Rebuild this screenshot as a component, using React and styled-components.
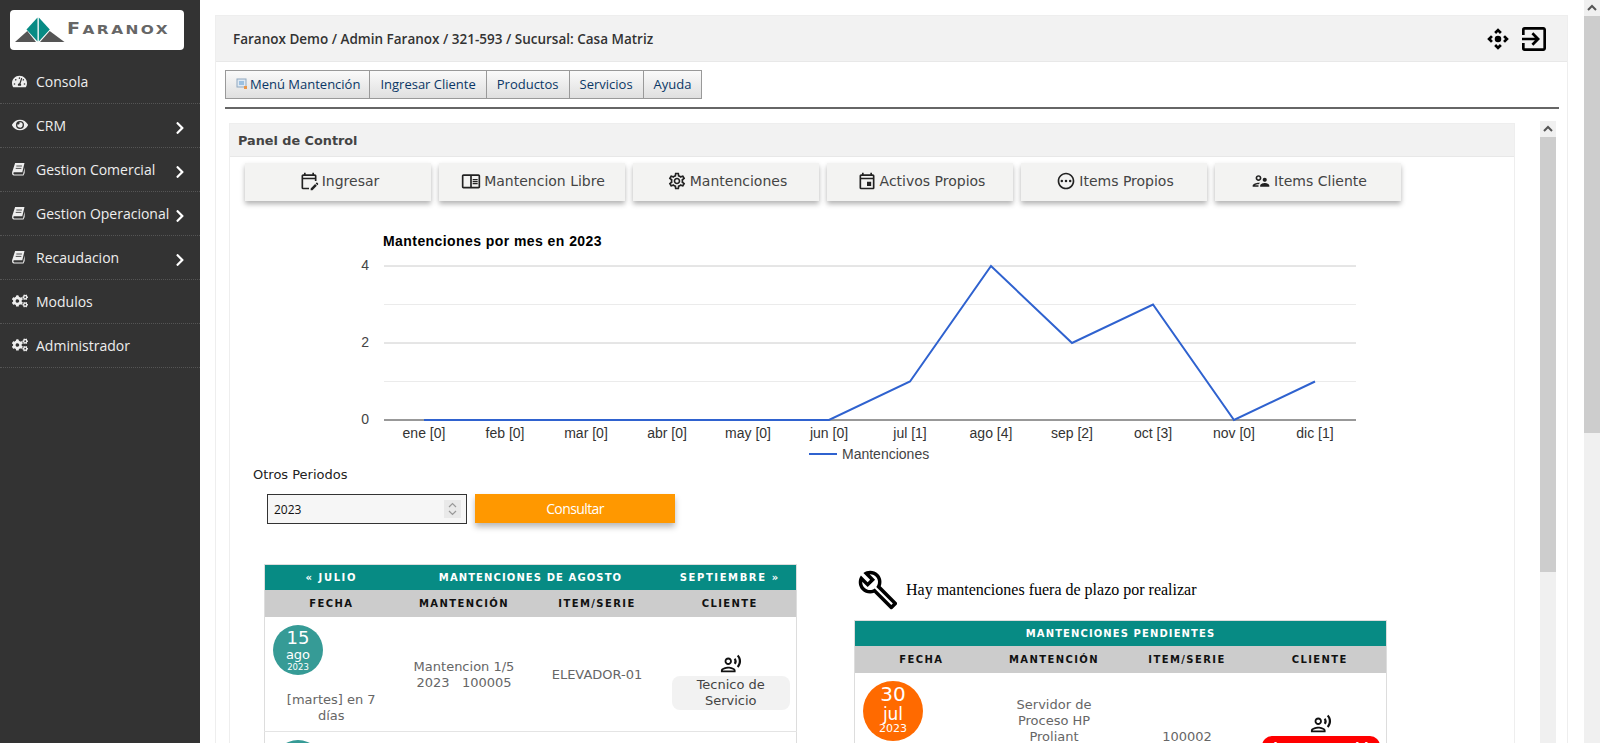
import React from 'react';
import styled, { createGlobalStyle } from 'styled-components';
import { FaTachometerAlt, FaEye, FaCogs, FaChevronRight } from 'react-icons/fa';
import {
  MdOutlineEditCalendar, MdOutlineChromeReaderMode, MdOutlineSettings, MdOutlineEvent,
  MdOutlinePending, MdOutlineSupervisorAccount, MdOutlineRecordVoiceOver, MdOutlineBuild,
  MdControlCamera, MdOutlineExitToApp,
} from 'react-icons/md';

const Global = createGlobalStyle`
  html, body { height: 100%; overflow: hidden; }
  body { margin: 0; background: #fff; font-family: "Open Sans", sans-serif; }
`;

const Layout = styled.div`display: flex; height: 100vh; overflow: hidden;`;
const Sidebar = styled.aside`width: 200px; flex: none; background: #333;`;
const LogoBox = styled.div`
  margin: 10px 16px 10px 10px; height: 40px; background: #fff; border-radius: 4px;
  display: flex; align-items: center; padding-left: 5px; gap: 2px;
`;
const LogoWord = styled.span`
  display: inline-block; font-family: "DejaVu Sans", sans-serif; font-weight: bold; font-size: 12.5px; color: #666;
  letter-spacing: 2px; transform: scaleX(1.23); transform-origin: left; line-height: 1; white-space: nowrap;
  &::first-letter { font-size: 15.5px; }
`;
const NavRow = styled.div`
  box-sizing: border-box; height: 44px; border-bottom: 1px dotted #555; display: flex; align-items: center;
  padding: 0 13px 1px 12px; color: #eee; font-size: 14px;
`;
const NavIcon = styled.span`width: 24px; flex: none; display: flex; font-size: 15px; color: #eee;`;
const NavLabel = styled.span`flex: 1; white-space: nowrap;`;
const NavArrow = styled.span`display: flex; font-size: 14px; color: #fff; margin-top: 5px;`;

const Main = styled.main`flex: 1; min-width: 0; padding: 15px 16px 0 15px; display: flex;`;
const Card = styled.div`flex: 1; min-width: 0; border: 1px solid #eee; border-bottom: 0;`;
const TopBar = styled.header`
  height: 45px; background: #f2f2f2; border-bottom: 1px solid #e8e8e8; display: flex;
  align-items: center; justify-content: space-between; padding: 0 17px 0 17px;
  color: #333; font-size: 13.5px; font-weight: 600;
`;
const TopIcons = styled.div`display: flex; align-items: center; gap: 7px; color: #000;`;
const Body = styled.div`padding: 8px 8px 0 9px;`;
const TabBar = styled.nav`display: flex; height: 29px;`;
const Tab = styled.a`
  display: flex; align-items: center; gap: 2px; padding: 0 10px 2px; border: 1px solid #999; margin-left: -1px;
  background: linear-gradient(#fafafa, #dfdfdf); color: #0a3766; font-size: 13px; white-space: nowrap;
  &:first-child { margin-left: 0; padding-right: 9px; }
`;
const Rule = styled.hr`margin: 8px 0 0; height: 2px; border: 0; background: #666;`;
const ScrollRow = styled.div`display: flex; margin: 12px 3px 0 0;`;
const ScrollContent = styled.div`flex: 1; min-width: 0; padding: 2px 25px 0 4px;`;
const ScrollTrack = styled.div`
  width: 16px; flex: none; background: #f0f0f0; display: flex; flex-direction: column;
  align-self: ${(p) => (p.$page ? 'stretch' : 'flex-start')}; height: ${(p) => (p.$page ? 'auto' : '1100px')};
`;
const ScrollArrow = styled.svg`display: block; width: 16px; height: 16px; flex: none;`;
const ScrollThumb = styled.div`background: #cdcdcd; height: ${(p) => p.$length}px; flex: none;`;
const Panel = styled.section`border: 1px solid #eee; border-bottom: 0;`;
const PanelTitle = styled.h2`
  margin: 0; height: 32px; background: #f2f2f2; border-bottom: 1px solid #e8e8e8; display: flex; align-items: center;
  padding-left: 8px; font: bold 12.8px "DejaVu Sans", sans-serif; color: #444;
`;
const ActionBar = styled.div`display: flex; gap: 8px; padding: 6px 0 0 15px;`;
const ActionButton = styled.button`
  width: 186px; height: 38px; border: 0; background: #f3f3f2; box-shadow: 0 3px 5px rgba(0,0,0,.3);
  display: flex; align-items: center; justify-content: center; gap: 3px; padding: 0 0 2px 2px;
  font: 14px "DejaVu Sans", sans-serif; color: #444;
  svg { color: #222; flex: none; }
`;
const ChartSvg = styled.svg`display: block; margin-top: 23px; width: 1284px; height: 240px;`;
const FieldLabel = styled.div`font: 13px/16px "DejaVu Sans", sans-serif; color: #222; padding: 3px 0 0 23px;`;
const QueryRow = styled.div`display: flex; gap: 8px; padding: 11px 0 0 37px;`;
const YearField = styled.div`position: relative; width: 200px; height: 30px;`;
const YearInput = styled.input`
  box-sizing: border-box; width: 100%; height: 100%; border: 1px solid #333; background: #f6f6f6; padding: 0 6px;
  font: 12px "Open Sans", sans-serif; color: #111; outline: 0;
  &::-webkit-inner-spin-button { display: none; }
`;
const Spinner = styled.svg`position: absolute; right: 6px; top: 6px; width: 17px; height: 18px; background: #e9e9e9;`;
const QueryButton = styled.button`
  width: 200px; height: 29px; border: 0; background: #ff9800; color: #fff; font: 14px "Open Sans", sans-serif;
  letter-spacing: -.6px; box-shadow: 0 4px 6px rgba(0,0,0,.28);
`;
const Columns = styled.div`display: flex; align-items: flex-start; gap: 57px; padding: 40px 0 0 34px;`;
const LeftColumn = styled.div`width: 533px; flex: none;`;
const RightColumn = styled.div`width: 533px; flex: none; margin-top: 5px;`;
const Alert = styled.div`
  box-sizing: border-box; display: flex; align-items: center; gap: 7px; padding: 2px 0 0 3px; height: 40px; margin-bottom: 11px;
  font: 16px "Liberation Serif", serif; color: #000; white-space: nowrap;
`;
const Table = styled.table`
  width: 100%; table-layout: fixed; border-collapse: collapse; border: 1px solid #ddd; border-bottom: 0;
  font: 13px/16px "DejaVu Sans", sans-serif; color: #666;
`;
const TitleCell = styled.th`
  background: #078b84; color: #fff; height: 25px; padding: 0; font: bold 10px "DejaVu Sans", sans-serif;
  letter-spacing: ${(p) => (p.$wide ? 1.1 : 1.6)}px; text-transform: uppercase;
`;
const HeadCell = styled.th`
  background: #ccc; color: #111; height: 27px; padding: 0; font: bold 10px "DejaVu Sans", sans-serif; letter-spacing: 1.4px;
`;
const Cell = styled.td`padding: 9px 6px 7px; text-align: center; vertical-align: middle; border-bottom: 1px solid #e4e4e4;`;
const ClientCell = styled(Cell)`padding: ${(p) => p.$top}px 6px 7px 8px;`;
const DateCell = styled(Cell)`
  padding: 8px 8px 7px; vertical-align: top; height: ${(p) => (p.$tall ? '110px' : 'auto')};
`;
const Bubble = styled.div`
  box-sizing: border-box; width: ${(p) => p.$size}px; height: ${(p) => p.$size}px; border-radius: 50%; background: ${(p) => p.$color};
  color: #fff; display: flex; flex-direction: column; align-items: center; justify-content: center; line-height: 1;
  padding-bottom: ${(p) => (p.$large ? 4 : 0)}px;
`;
const BubbleDay = styled.span`font-size: ${(p) => (p.$large ? 20 : 18)}px;`;
const BubbleMonth = styled.span`font-size: ${(p) => (p.$large ? 17 : 13)}px; margin-top: ${(p) => (p.$large ? 2 : 1)}px;`;
const BubbleYear = styled.span`font-size: ${(p) => (p.$large ? 11 : 8.5)}px; margin-top: ${(p) => (p.$large ? 0 : 2)}px;`;
const DateNote = styled.div`margin-top: 17px;`;
const ClientIcon = styled.div`display: flex; justify-content: center; color: #111;`;
const ClientBadge = styled.div`margin-top: 1px; padding: 1px 4px; border-radius: 8px; background: #f2f2f2; color: #444;`;
const AlertBadge = styled(ClientBadge)`
  background: #f00; color: #fff; font-weight: bold; font-size: 12.5px; white-space: nowrap; padding: 4px 2px; border-radius: 10px;
`;

const MiniIcon = () => (
  <svg width="12" height="12" viewBox="0 0 12 12">
    <rect x="1" y="1" width="9" height="8" fill="#dfe9f3" stroke="#8fa8c0" />
    <rect x="3" y="3" width="5" height="4" fill="#9cc0e0" />
    <rect x="8" y="8" width="3" height="3" fill="#e9964a" />
  </svg>
);

const BookIcon = () => (
  <svg width="13" height="14" viewBox="0 0 15 14" preserveAspectRatio="none">
    <path d="M3.6 1H14.4L11.9 10.2H2.6C1.3 10.2 1.3 12.4 2.6 12.4H12.7L14.6 5.6V11L13.2 13.6H2.2C-.2 13.6-.4 10.6.8 8.4Z" fill="#eee" />
    <path d="M5 4H11.5M4.3 6.4H10.8" stroke="#333" strokeWidth=".9" />
  </svg>
);

const LogoMark = () => (
  <svg width="50" height="26" viewBox="0 0 50 26">
    <path d="M0 25 L12.3 14 L21 25 Z" fill="#555" />
    <path d="M25 25 L34.7 14 L49.5 25 Z" fill="#555" />
    <path d="M22.5 .5 L22.5 24.5 L11.5 12.5 Z" fill="#078b84" />
    <path d="M23.8 .5 L23.8 24.5 L34.8 12.5 Z" fill="#078b84" />
  </svg>
);

const UpChevron = () => (
  <ScrollArrow viewBox="0 0 16 16"><path d="M4 10 L8 6 L12 10" fill="none" stroke="#555" strokeWidth="2" /></ScrollArrow>
);

const navItems = [
  { icon: <FaTachometerAlt />, label: 'Consola' },
  { icon: <FaEye size={16} />, label: 'CRM', sub: true },
  { icon: <BookIcon />, label: 'Gestion Comercial', sub: true },
  { icon: <BookIcon />, label: 'Gestion Operacional', sub: true },
  { icon: <BookIcon />, label: 'Recaudacion', sub: true },
  { icon: <FaCogs size={16} />, label: 'Modulos' },
  { icon: <FaCogs size={16} />, label: 'Administrador' },
];

const actions = [
  { icon: <MdOutlineEditCalendar size={20} />, label: 'Ingresar' },
  { icon: <MdOutlineChromeReaderMode size={20} />, label: 'Mantencion Libre' },
  { icon: <MdOutlineSettings size={20} />, label: 'Mantenciones' },
  { icon: <MdOutlineEvent size={20} />, label: 'Activos Propios' },
  { icon: <MdOutlinePending size={20} />, label: 'Items Propios' },
  { icon: <MdOutlineSupervisorAccount size={20} />, label: 'Items Cliente' },
];

const months = [
  ['ene', 0], ['feb', 0], ['mar', 0], ['abr', 0], ['may', 0], ['jun', 0],
  ['jul', 1], ['ago', 4], ['sep', 2], ['oct', 3], ['nov', 0], ['dic', 1],
];
const px = (i) => 194 + 81 * i;
const py = (v) => 196 - v * 38.5;

const Chart = () => (
  <ChartSvg viewBox="0 0 1284 240" fontFamily='"Liberation Sans", sans-serif' fontSize="14">
    <text x="153" y="22" fontWeight="bold" fill="#000" letterSpacing=".43">Mantenciones por mes en 2023</text>
    {[1, 3].map((v) => <line key={v} x1="154" x2="1126" y1={py(v)} y2={py(v)} stroke="#ebebeb" />)}
    {[2, 4].map((v) => <line key={v} x1="154" x2="1126" y1={py(v)} y2={py(v)} stroke="#ccc" />)}
    {[0, 2, 4].map((v) => <text key={v} x="139" y={py(v) + 4} textAnchor="end" fill="#444">{v}</text>)}
    <line x1="154" x2="1126" y1="196" y2="196" stroke="#333" />
    <polyline fill="none" stroke="#2f62cf" strokeWidth="2" points={months.map(([, v], i) => `${px(i)},${py(v)}`).join(' ')} />
    {months.map(([m, v], i) => (
      <text key={m} x={px(i)} y="214" textAnchor="middle" fill="#333">{`${m} [${v}]`}</text>
    ))}
    <line x1="579" x2="607" y1="230" y2="230" stroke="#2f62cf" strokeWidth="2" />
    <text x="612" y="235" fill="#444">Mantenciones</text>
  </ChartSvg>
);

const Heads = () => (
  <tr>
    <HeadCell>FECHA</HeadCell><HeadCell>MANTENCIÓN</HeadCell><HeadCell>ITEM/SERIE</HeadCell><HeadCell>CLIENTE</HeadCell>
  </tr>
);

export default function App() {
  return (
    <>
      <Global />
      <Layout>
        <Sidebar>
          <LogoBox><LogoMark /><LogoWord>FARANOX</LogoWord></LogoBox>
          {navItems.map((n) => (
            <NavRow key={n.label}>
              <NavIcon>{n.icon}</NavIcon>
              <NavLabel>{n.label}</NavLabel>
              {n.sub && <NavArrow><FaChevronRight /></NavArrow>}
            </NavRow>
          ))}
        </Sidebar>
        <Main>
          <Card>
            <TopBar>
              <span>Faranox Demo / Admin Faranox / 321-593 / Sucursal: Casa Matriz</span>
              <TopIcons><MdControlCamera size={26} /><MdOutlineExitToApp size={32} /></TopIcons>
            </TopBar>
            <Body>
              <TabBar>
                <Tab><MiniIcon />Menú Mantención</Tab>
                <Tab>Ingresar Cliente</Tab>
                <Tab>Productos</Tab>
                <Tab>Servicios</Tab>
                <Tab>Ayuda</Tab>
              </TabBar>
              <Rule />
              <ScrollRow>
                <ScrollContent>
                  <Panel>
                    <PanelTitle>Panel de Control</PanelTitle>
                    <ActionBar>
                      {actions.map((a) => <ActionButton key={a.label}>{a.icon}{a.label}</ActionButton>)}
                    </ActionBar>
                    <Chart />
                    <FieldLabel>Otros Periodos</FieldLabel>
                    <QueryRow>
                      <YearField>
                        <YearInput type="number" defaultValue="2023" />
                        <Spinner viewBox="0 0 17 18">
                          <path d="M5 7 L8.5 3.5 L12 7 M5 11 L8.5 14.5 L12 11" fill="none" stroke="#999" strokeWidth="1.2" />
                        </Spinner>
                      </YearField>
                      <QueryButton>Consultar</QueryButton>
                    </QueryRow>
                    <Columns>
                      <LeftColumn>
                        <Table>
                          <thead>
                            <tr>
                              <TitleCell>« Julio</TitleCell>
                              <TitleCell colSpan="2" $wide>Mantenciones de Agosto</TitleCell>
                              <TitleCell>Septiembre »</TitleCell>
                            </tr>
                            <Heads />
                          </thead>
                          <tbody>
                            <tr>
                              <DateCell>
                                <Bubble $size={50} $color="#369b96">
                                  <BubbleDay>15</BubbleDay><BubbleMonth>ago</BubbleMonth><BubbleYear>2023</BubbleYear>
                                </Bubble>
                                <DateNote>[martes] en 7 días</DateNote>
                              </DateCell>
                              <Cell>Mantencion 1/5<br />2023 &nbsp; 100005</Cell>
                              <Cell>ELEVADOR-01</Cell>
                              <ClientCell $top={22}>
                                <ClientIcon><MdOutlineRecordVoiceOver size={22} /></ClientIcon>
                                <ClientBadge>Tecnico de Servicio</ClientBadge>
                              </ClientCell>
                            </tr>
                            <tr>
                              <DateCell><Bubble $size={50} $color="#369b96" /></DateCell>
                              <Cell /><Cell /><Cell />
                            </tr>
                          </tbody>
                        </Table>
                      </LeftColumn>
                      <RightColumn>
                        <Alert><MdOutlineBuild size={42} />Hay mantenciones fuera de plazo por realizar</Alert>
                        <Table>
                          <thead>
                            <tr><TitleCell colSpan="4" $wide>Mantenciones Pendientes</TitleCell></tr>
                            <Heads />
                          </thead>
                          <tbody>
                            <tr>
                              <DateCell $tall>
                                <Bubble $size={60} $color="#ff6a00" $large>
                                  <BubbleDay $large>30</BubbleDay><BubbleMonth $large>jul</BubbleMonth><BubbleYear $large>2023</BubbleYear>
                                </Bubble>
                              </DateCell>
                              <Cell>Servidor de Proceso HP Proliant<br /><br /><br /></Cell>
                              <Cell>100002</Cell>
                              <ClientCell $top={9}>
                                <ClientIcon><MdOutlineRecordVoiceOver size={22} /></ClientIcon>
                                <AlertBadge>Sin responsable</AlertBadge>
                              </ClientCell>
                            </tr>
                          </tbody>
                        </Table>
                      </RightColumn>
                    </Columns>
                  </Panel>
                </ScrollContent>
                <ScrollTrack>
                  <UpChevron />
                  <ScrollThumb $length={435} />
                </ScrollTrack>
              </ScrollRow>
            </Body>
          </Card>
        </Main>
        <ScrollTrack $page>
          <UpChevron />
          <ScrollThumb $length={417} />
        </ScrollTrack>
      </Layout>
    </>
  );
}
